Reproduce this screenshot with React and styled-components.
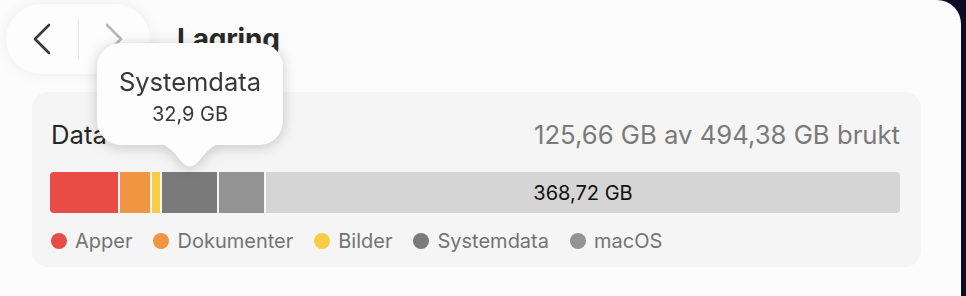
import React from 'react'
import styled, { createGlobalStyle } from 'styled-components'

const GlobalStyle = createGlobalStyle`
  html, body {
    margin: 0;
    padding: 0;
    background: #0c0b25;
  }
  body {
    font-family: Inter, "Noto Sans", "Liberation Sans", sans-serif;
    -webkit-font-smoothing: antialiased;
  }
`

const Window = styled.div`
  position: relative;
  width: 961px;
  height: 296px;
  box-sizing: border-box;
  background: #fcfcfc;
  border-top-right-radius: 24px;
  overflow: hidden;
  padding: 4px 0 0 6px;
`

const Toolbar = styled.div`
  display: flex;
  align-items: center;
  height: 70px;
`

const NavPill = styled.div`
  display: flex;
  align-items: center;
  width: 144px;
  height: 70px;
  border-radius: 35px;
  background: #fdfdfd;
  box-shadow: 0 0 14px rgba(0, 0, 0, 0.07);
`

const NavButton = styled.div`
  display: flex;
  align-items: center;
  justify-content: center;
  flex: 1;
  height: 100%;
  color: ${p => (p.disabled ? '#b8b8b8' : '#3a3a3a')};
`

const Divider = styled.div`
  width: 1px;
  height: 40px;
  background: #e6e6e6;
`

const Title = styled.h1`
  margin: 0 0 0 27px;
  font-size: 28px;
  font-weight: 700;
  color: #2a2a2a;
  letter-spacing: -0.2px;
`

const Card = styled.section`
  margin: 18px 0 0 26px;
  width: 889px;
  box-sizing: border-box;
  padding: 28px 21px 16px 18px;
  background: #f5f5f5;
  border-radius: 16px;
`

const CardHeader = styled.div`
  display: flex;
  justify-content: space-between;
  align-items: center;
  height: 28px;
  padding-left: 1px;
`

const Label = styled.span`
  font-size: 25.7px;
  color: ${p => (p.muted ? '#7a7a7a' : '#262626')};
`

const Bar = styled.div`
  display: flex;
  gap: 2px;
  height: 41px;
  margin-top: 24px;
  border-radius: 4px;
  overflow: hidden;
`

const Segment = styled.div`
  display: flex;
  align-items: center;
  justify-content: center;
  flex: ${p => (p.grow ? 1 : 'none')};
  background: ${p => p.color};
  font-size: 20px;
  color: #111;
`

const Legend = styled.div`
  display: flex;
  align-items: center;
  gap: 21px;
  height: 20px;
  margin-top: 18px;
  padding-left: 1px;
`

const LegendItem = styled.div`
  display: flex;
  align-items: center;
  gap: 8px;
  font-size: 20px;
  color: #737373;
`

const Dot = styled.span`
  width: 16px;
  height: 16px;
  border-radius: 50%;
  background: ${p => p.color};
`

const Tooltip = styled.div`
  position: absolute;
  left: 97px;
  top: 43px;
  width: 186px;
  display: flex;
  flex-direction: column;
  align-items: center;
  filter: drop-shadow(0 2px 7px rgba(0, 0, 0, 0.2));
`

const TooltipBody = styled.div`
  width: 100%;
  height: 102px;
  box-sizing: border-box;
  padding-top: 24px;
  display: flex;
  flex-direction: column;
  align-items: center;
  gap: 5px;
  background: #fdfdfd;
  border-radius: 24px;
`

const TooltipTitle = styled.div`
  font-size: 25.5px;
  line-height: 30px;
  color: #383838;
`

const TooltipValue = styled.div`
  font-size: 20px;
  line-height: 24px;
  color: #383838;
`

const Pointer = styled.svg`
  display: block;
  margin-top: -1px;
`

const segments = [
  { name: 'Apper', color: '#e94c47', width: 68 },
  { name: 'Dokumenter', color: '#f09542', width: 30 },
  { name: 'Bilder', color: '#f7cd46', width: 8 },
  { name: 'Systemdata', color: '#7a7a7a', width: 55 },
  { name: 'macOS', color: '#939393', width: 45 },
]

const Chevron = ({ dir }) => (
  <svg width="20" height="32" viewBox="0 0 20 32" fill="none">
    <path
      d={dir === 'left' ? 'M17 2 L3 16 L17 30' : 'M3 2 L17 16 L3 30'}
      stroke="currentColor"
      strokeWidth="2.6"
      strokeLinecap="round"
      strokeLinejoin="round"
    />
  </svg>
)

export default function App() {
  return (
    <>
      <GlobalStyle />
      <Window>
        <Toolbar>
          <NavPill>
            <NavButton><Chevron dir="left" /></NavButton>
            <Divider />
            <NavButton disabled><Chevron dir="right" /></NavButton>
          </NavPill>
          <Title>Lagring</Title>
        </Toolbar>

        <Card>
          <CardHeader>
            <Label>Data</Label>
            <Label muted>125,66 GB av 494,38 GB brukt</Label>
          </CardHeader>
          <Bar>
            {segments.map(s => (
              <Segment key={s.name} color={s.color} style={{ width: s.width }} />
            ))}
            <Segment grow color="#d5d5d5">368,72 GB</Segment>
          </Bar>
          <Legend>
            {segments.map(s => (
              <LegendItem key={s.name}>
                <Dot color={s.color} />
                {s.name}
              </LegendItem>
            ))}
          </Legend>
        </Card>

        <Tooltip>
          <TooltipBody>
            <TooltipTitle>Systemdata</TooltipTitle>
            <TooltipValue>32,9 GB</TooltipValue>
          </TooltipBody>
          <Pointer width="64" height="24" viewBox="0 0 64 24">
            <path
              d="M0 0 C14 0 22 19 28 21.5 Q32 23.5 36 21.5 C42 19 50 0 64 0 Z"
              fill="#fdfdfd"
            />
          </Pointer>
        </Tooltip>
      </Window>
    </>
  )
}
